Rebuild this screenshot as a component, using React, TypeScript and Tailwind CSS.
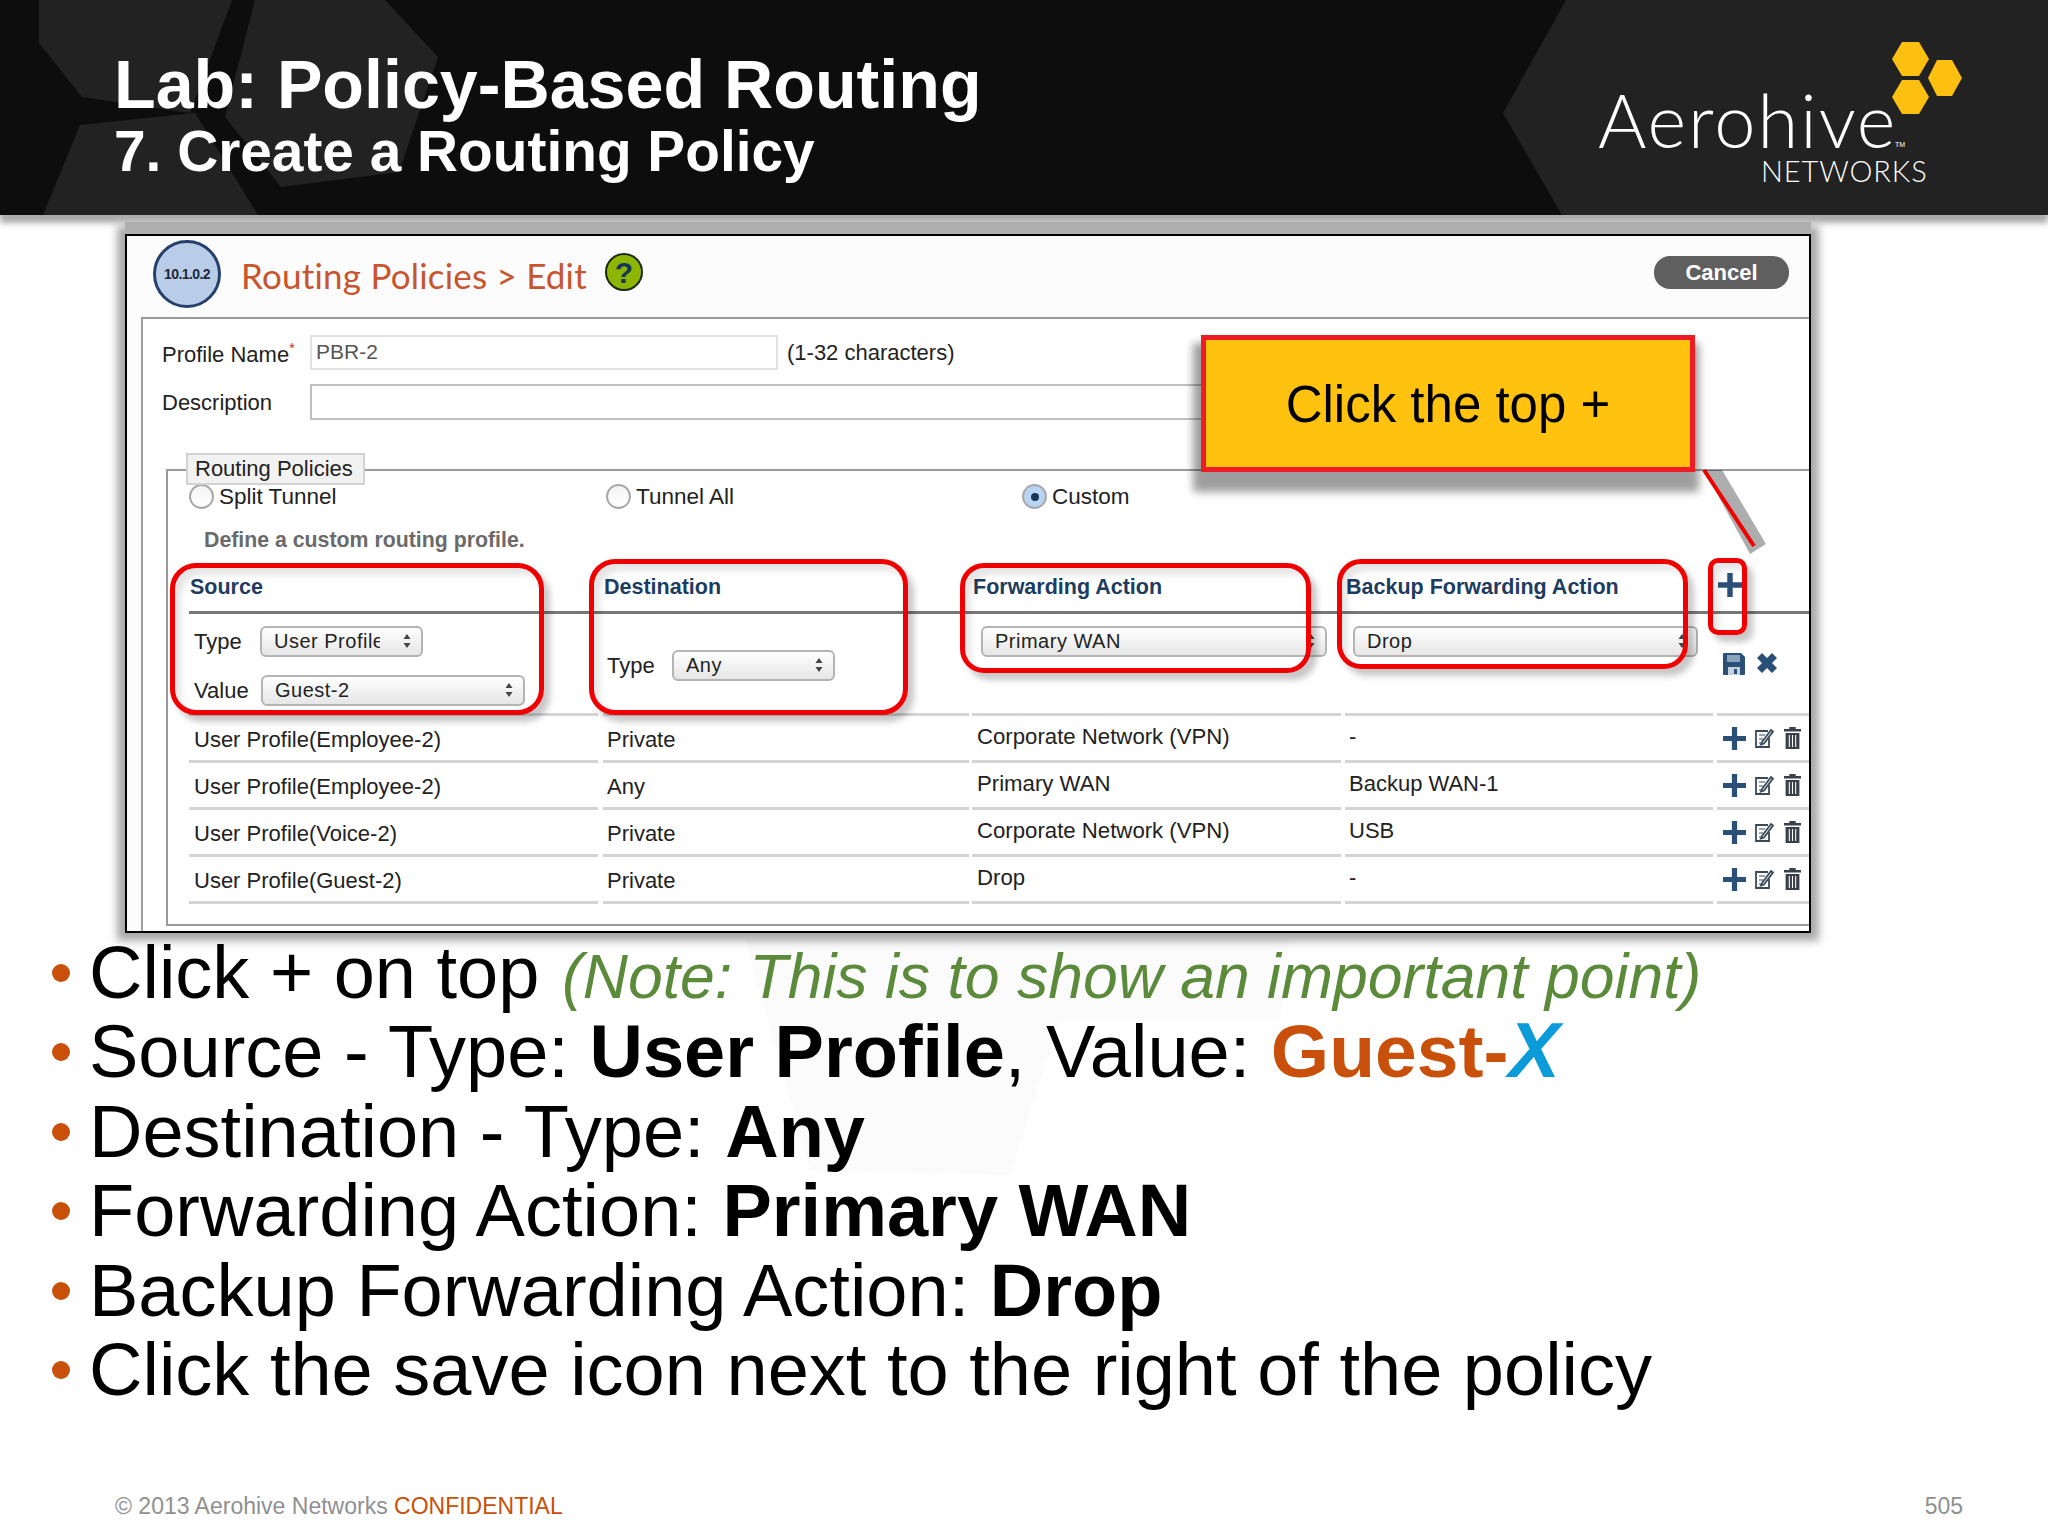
import React from "react";

const ui = "font-['Liberation_Sans',Arial,sans-serif]";

const rows = [
  ["User Profile(Employee-2)", "Private", "Corporate Network (VPN)", "-"],
  ["User Profile(Employee-2)", "Any", "Primary WAN", "Backup WAN-1"],
  ["User Profile(Voice-2)", "Private", "Corporate Network (VPN)", "USB"],
  ["User Profile(Guest-2)", "Private", "Drop", "-"],
];

function Plus({ size = 22 }: { size?: number }) {
  return (
    <svg width={size} height={size} viewBox="0 0 22 22">
      <path d="M8.500 0h5v8.500H22v5h-8.500V22h-5v-8.500H0v-5h8.500z" fill="#2a5078" />
    </svg>
  );
}

function EditIcon() {
  return (
    <svg width="20" height="22" viewBox="0 0 20 22" fill="none" stroke="#3a4a58" strokeWidth="1.8">
      <path d="M14 4H2v16h13v-9" />
      <path d="M5 8h6M5 12h4M5 16h3" strokeWidth="1.2" />
      <path d="M8 15l9-12 2 1.500-9 12-3 1z" fill="#fff" />
    </svg>
  );
}

function TrashIcon() {
  return (
    <svg width="17" height="22" viewBox="0 0 16 22" preserveAspectRatio="none">
      <path d="M5 0h6v2h5v2.500H0V2h5zM1.500 6h13v16h-13z" fill="#3a4048" />
      <path d="M5 8v12M8 8v12M11 8v12" stroke="#fff" strokeWidth="1" />
    </svg>
  );
}

function SaveIcon() {
  return (
    <svg width="22" height="22" viewBox="0 0 22 22">
      <path d="M1 0h17l4 4v17a1 1 0 0 1-1 1H1a1 1 0 0 1-1-1V1a1 1 0 0 1 1-1z" fill="#2a5078" />
      <rect x="4" y="2" width="13" height="7" fill="#8aa4bc" />
      <rect x="5" y="14" width="12" height="8" fill="#c4d0da" />
      <rect x="11" y="16" width="3" height="5" fill="#2a5078" />
    </svg>
  );
}

function CloseIcon() {
  return (
    <svg width="20" height="20" viewBox="0 0 20 20">
      <path d="M5 0l5 5 5-5 5 5-5 5 5 5-5 5-5-5-5 5-5-5 5-5-5-5z" fill="#2a5078" />
    </svg>
  );
}

function Select({ label, width, clip }: { label: string; width: string; clip?: string }) {
  return (
    <div
      className={`${width} h-[31px] shrink-0 rounded-[6px] border-2 border-[#b4b4b4] bg-gradient-to-b from-[#ffffff] to-[#e6e6e6] flex items-center justify-between pl-[12px] pr-[10px] text-[20px] tracking-[0.5px] text-[#222] font-['Liberation_Sans',Arial,sans-serif]`}
    >
      <span className={`overflow-hidden whitespace-nowrap ${clip ?? ""}`}>{label}</span>
      <svg width="8" height="16" viewBox="0 0 8 16" className="shrink-0">
        <path d="M4 1l3.500 5h-7zM4 15l3.500-5h-7z" fill="#444" />
      </svg>
    </div>
  );
}

function Radio({ checked }: { checked?: boolean }) {
  return (
    <div
      className={`w-[25px] h-[25px] rounded-full border-2 border-[#a8a8a8] flex items-center justify-center ${
        checked ? "bg-[#b9d3f2]" : "bg-gradient-to-b from-[#f4f4f4] to-[#ffffff]"
      }`}
    >
      {checked && <div className="w-[8px] h-[8px] rounded-full bg-[#17365c]" />}
    </div>
  );
}

function RadioItem({ label, checked }: { label: string; checked?: boolean }) {
  return (
    <div className="flex items-center gap-[5px] text-[22.500px] text-[#222]">
      <Radio checked={checked} />
      <span>{label}</span>
    </div>
  );
}

function Ring({ className }: { className: string }) {
  return (
    <div
      className={`absolute border-[5px] border-[#f00000] shadow-[6px_7px_6px_rgba(0,0,0,0.22),inset_6px_7px_6px_rgba(0,0,0,0.1)] ${className}`}
    />
  );
}

function HeaderShapes() {
  return (
    <svg className="absolute inset-0" width="2048" height="215" viewBox="0 0 2048 215">
      <path d="M39 0H232L190 113 82 97 39 43z" fill="#222" />
      <path d="M255 0H385L438 57 399 172 281 187 225 117z" fill="#222" />
      <path d="M80 125L195 113 258 215H43z" fill="#222" />
      <path d="M1566 0H2048V215H1562L1503 113z" fill="#222" />
    </svg>
  );
}

function Bullet({ children }: { children: React.ReactNode }) {
  return (
    <li className="flex items-start">
      <span className="w-[18px] h-[18px] rounded-full bg-[#c8500a] mt-[31px] mr-[19px] shrink-0" />
      <span className="whitespace-nowrap">{children}</span>
    </li>
  );
}

export default function App() {
  return (
    <div className={`relative w-[2048px] h-[1536px] overflow-hidden bg-white flex flex-col ${ui}`}>
      {/* faint watermark behind the bullets */}
      <svg className="absolute left-[745px] top-[940px]" width="550" height="240" viewBox="0 0 550 240">
        <path d="M0 0H545L535 80H315L265 235 65 230z" fill="#fbfbfb" />
      </svg>

      {/* top bar */}
      <header className="relative z-10 h-[215px] shrink-0 bg-[#0d0d0d] shadow-[0_8px_6px_#aaaaaa]">
        <HeaderShapes />
        <div className="relative w-fit ml-[114px] pt-[47px] text-white font-bold whitespace-nowrap">
          <h1 className="text-[68.200px] leading-[75px]">Lab: Policy-Based Routing</h1>
          <h2 className="text-[56.800px] leading-[60px]">7. Create a Routing Policy</h2>
        </div>
        {/* logo */}
        <div className="absolute left-[1598px] top-[40px] w-[370px] h-[150px] text-white">
          <svg className="absolute left-[294px] top-[2px]" width="72" height="74" viewBox="0 0 72 74">
            <path d="M10 0H27L37 17 27 34H10L0 17z" fill="#fdbf10" />
            <path d="M45 18H60L70 36 60 54H45L36 36z" fill="#fdbf10" />
            <path d="M10 38H27L37 55 27 72H10L0 55z" fill="#fdbf10" />
          </svg>
          <div className="absolute left-0 top-[47px] font-['Lato',sans-serif] font-light text-[74px] leading-[66px] tracking-[2px]">
            Aerohive
          </div>
          <div className="absolute left-[297px] top-[101px] font-['Liberation_Sans',sans-serif] text-[7px] leading-[8px]">
            TM
          </div>
          <div className="absolute left-[163px] top-[114px] font-['Lato',sans-serif] font-light text-[29px] leading-[34px] tracking-[0.900px]">
            NETWORKS
          </div>
        </div>
      </header>

      {/* screenshot panel */}
      <section className="relative ml-[125px] mt-[19px] w-[1686px] h-[699px] shrink-0 border-2 border-black bg-[#fcfcfc] shadow-[0_-12px_0_#b0b0b0,0_0_8px_8px_#aaaaaa] text-[#222]">
        <div className="h-[83px] border-b-2 border-[#9a9a9a] ml-[14px] flex items-start">
          <div className="ml-[12px] mt-[4px] w-[68px] h-[68px] rounded-full border-[3px] border-[#25416b] bg-[#b9cde8] flex items-center justify-center text-[14px] font-bold tracking-[-0.6px] text-[#1a2a3a]">
            10.1.0.2
          </div>
          <div className="ml-[20px] mt-[17px] font-['Lato',sans-serif] text-[35px] leading-[44px] tracking-[0.2px] text-[#c8552d]">
            Routing Policies &gt; Edit
          </div>
          <div className="ml-[18px] mt-[17px] w-[38px] h-[38px] rounded-full border-2 border-[#1a2a10] bg-[#8db600] flex items-center justify-center text-[30px] font-bold text-[#17365c]">
            ?
          </div>
          <div className="ml-auto mr-[20px] mt-[20px] w-[135px] h-[33px] rounded-[16px] bg-[#5f5f5f] flex items-center justify-center text-[22px] font-bold text-white">
            Cancel
          </div>
        </div>

        <div className="ml-[14px] h-[612px] bg-white border-l-2 border-[#a0a0a0]">
          <div className="flex items-center pt-[15px] text-[22px]">
            <div className="ml-[19px] w-[148px] pt-[4px]">
              Profile Name<span className="text-[#d02020] text-[14px] align-top">*</span>
            </div>
            <div className="w-[468px] h-[35px] border-2 border-[#e2e2e2] pl-[4px] text-[21px] leading-[29px] text-[#555]">
              PBR-2
            </div>
            <div className="ml-[9px] text-[22px]">(1-32 characters)</div>
          </div>
          <div className="flex items-center mt-[13px] text-[22px]">
            <div className="ml-[19px] w-[148px]">Description</div>
            <div className="w-[1000px] h-[36px] border-2 border-[#c0c0c0]" />
          </div>

          <div className="relative ml-[23px] mt-[49px] h-[457px] border-l-2 border-t-2 border-b-2 border-[#9a9a9a]">
            <div className="absolute left-[18px] -top-[18px] w-[179px] h-[32px] border-2 border-[#d2d2d2] bg-[#f2f2f2] pl-[7px] text-[22px] leading-[27px]">
              Routing Policies
            </div>

            <div className="grid grid-cols-[417px_416px_300px] pl-[21px] pt-[9px]">
              <RadioItem label="Split Tunnel" />
              <RadioItem label="Tunnel All" />
              <RadioItem label="Custom" checked />
            </div>
            <div className="pl-[36px] mt-[13px] text-[21.300px] leading-[26px] font-bold text-[#6a6a6a]">
              Define a custom routing profile.
            </div>

            <div className="grid grid-cols-[414px_369px_373px_372px_92px] pl-[21px] mt-[18px]">
              {/* heading row */}
              {["Source", "Destination", "Forwarding Action", "Backup Forwarding Action"].map((h) => (
                <div
                  key={h}
                  className="h-[43px] border-b-[3px] border-[#777] pl-[1px] text-[21.500px] font-bold leading-[32px] text-[#1c3c60]"
                >
                  {h}
                </div>
              ))}
              <div className="h-[43px] border-b-[3px] border-[#777]" />

              {/* edit row */}
              <div className="h-[102px] border-b-[3px] border-[#d4d4d4] mr-[5px] pl-[5px] pt-[12px] text-[22px]">
                <div className="flex items-center h-[31px]">
                  <span className="w-[66px]">Type</span>
                  <Select label="User Profile" width="w-[163px]" clip="w-[106px]" />
                </div>
                <div className="flex items-center h-[31px] mt-[18px]">
                  <span className="w-[67px]">Value</span>
                  <Select label="Guest-2" width="w-[264px]" />
                </div>
              </div>
              <div className="h-[102px] border-b-[3px] border-[#d4d4d4] mr-[3px] pl-[4px] pt-[36px] text-[22px]">
                <div className="flex items-center h-[31px]">
                  <span className="w-[65px]">Type</span>
                  <Select label="Any" width="w-[163px]" />
                </div>
              </div>
              <div className="h-[102px] border-b-[3px] border-[#d4d4d4] mr-[4px] pl-[9px] pt-[12px]">
                <Select label="Primary WAN" width="w-[346px]" />
              </div>
              <div className="h-[102px] border-b-[3px] border-[#d4d4d4] mr-[4px] pl-[8px] pt-[12px]">
                <Select label="Drop" width="w-[345px]" />
              </div>
              <div className="h-[102px] border-b-[3px] border-[#d4d4d4] pl-[6px] pt-[39px] flex items-start gap-[12px]">
                <SaveIcon />
                <CloseIcon />
              </div>

              {/* saved policies */}
              {rows.map((r, i) => (
                <React.Fragment key={i}>
                  <div className="h-[47px] border-b-[3px] border-[#d4d4d4] mr-[5px] pl-[5px] text-[22px] leading-[47px]">
                    {r[0]}
                  </div>
                  <div className="h-[47px] border-b-[3px] border-[#d4d4d4] mr-[3px] pl-[4px] text-[22px] leading-[47px]">
                    {r[1]}
                  </div>
                  <div className="h-[47px] border-b-[3px] border-[#d4d4d4] mr-[4px] pl-[5px] text-[22.200px] leading-[41px]">
                    {r[2]}
                  </div>
                  <div className="h-[47px] border-b-[3px] border-[#d4d4d4] mr-[4px] pl-[4px] text-[22px] leading-[41px]">
                    {r[3]}
                  </div>
                  <div className="h-[47px] border-b-[3px] border-[#d4d4d4] pl-[6px] pt-[11px] flex items-start gap-[8px]">
                    <Plus size={23} />
                    <EditIcon />
                    <span className="ml-[2px]">
                      <TrashIcon />
                    </span>
                  </div>
                </React.Fragment>
              ))}
            </div>
          </div>
        </div>
      </section>

      {/* bullets */}
      <ul className="relative ml-[52px] mt-0 text-[74px] leading-[79.4px] text-black">
        <Bullet>
          Click + on top{" "}
          <em className="text-[62.500px] leading-none text-[#5b8a3a] ml-[2px]">
            (Note: This is to show an important point)
          </em>
        </Bullet>
        <Bullet>
          Source - Type: <b>User Profile</b>, Value: <b className="text-[75px] leading-none text-[#c8500a]">Guest-</b>
          <b className="text-[77px] leading-none italic text-[#0a9bd8]">X</b>
        </Bullet>
        <Bullet>
          Destination - Type: <b>Any</b>
        </Bullet>
        <Bullet>
          Forwarding Action: <b>Primary WAN</b>
        </Bullet>
        <Bullet>
          Backup Forwarding Action: <b>Drop</b>
        </Bullet>
        <Bullet>Click the save icon next to the right of the policy</Bullet>
      </ul>

      <footer className="relative mt-auto mb-[16px] flex justify-between pl-[115px] pr-[85px] text-[23px] leading-[28px] text-[#909090]">
        <span>
          © 2013 Aerohive Networks <span className="text-[#c8500a]">CONFIDENTIAL</span>
        </span>
        <span>505</span>
      </footer>

      {/* annotations on top of the screenshot */}
      <Ring className="left-[170px] top-[563px] w-[374px] h-[152px] rounded-[26px]" />
      <Ring className="left-[589px] top-[559px] w-[319px] h-[156px] rounded-[26px]" />
      <Ring className="left-[960px] top-[563px] w-[351px] h-[110px] rounded-[24px]" />
      <Ring className="left-[1337px] top-[559px] w-[351px] h-[110px] rounded-[24px]" />
      <Ring className="left-[1708px] top-[558px] w-[39px] h-[77px] rounded-[10px]" />

      <div className="absolute left-[1718px] top-[573px]">
        <Plus size={24} />
      </div>

      <svg className="absolute left-[1690px] top-[460px]" width="90" height="110" viewBox="0 0 90 110">
        <path d="M14 10H32L76 84 60 94z" fill="rgba(0,0,0,0.32)" />
        <path d="M14 10L64 86" stroke="#f00000" strokeWidth="4" />
      </svg>
      <div className="absolute left-[1201px] top-[335px] w-[494px] h-[137px] border-[5px] border-[#ee1c25] bg-[#ffc20e] shadow-[-2px_14px_8px_6px_rgba(0,0,0,0.38)] flex items-center justify-center pt-[3px] text-[51px] text-black">
        Click the top +
      </div>
    </div>
  );
}
